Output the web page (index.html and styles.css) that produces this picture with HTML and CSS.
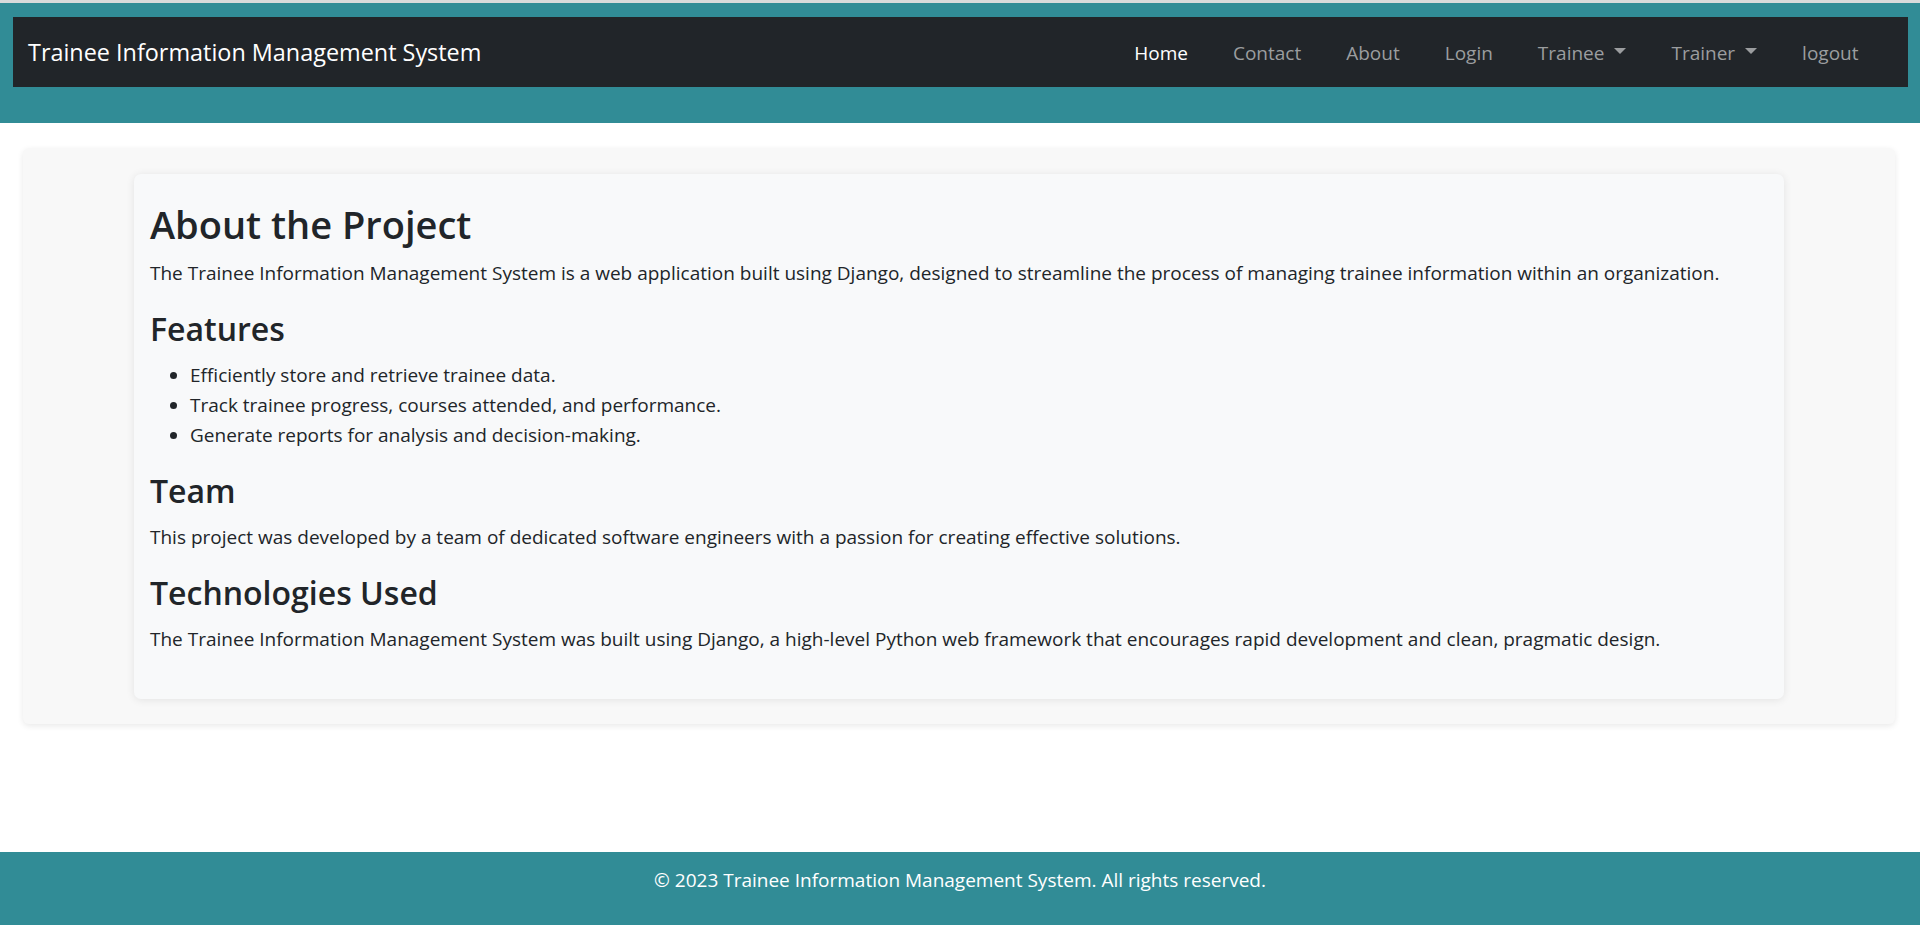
FILE: index.html
```html
<!DOCTYPE html>
<html lang="en">
<head>
<meta charset="utf-8">
<title>About - Trainee Information Management System</title>
<link rel="stylesheet" href="styles.css">
</head>
<body>
<header class="site-header">
  <nav class="navbar">
    <a class="brand" href="#">Trainee Information Management System</a>
    <ul class="nav-links">
      <li><a class="nav-link active" href="#">Home</a></li>
      <li><a class="nav-link" href="#">Contact</a></li>
      <li><a class="nav-link" href="#">About</a></li>
      <li><a class="nav-link" href="#">Login</a></li>
      <li><a class="nav-link dropdown-toggle" href="#">Trainee</a></li>
      <li><a class="nav-link dropdown-toggle" href="#">Trainer</a></li>
      <li><a class="nav-link" href="#">logout</a></li>
    </ul>
  </nav>
</header>

<main class="page">
  <section class="outer-card">
    <div class="about-card">
      <h1 class="title">About the Project</h1>
      <p>The Trainee Information Management System is a web application built using Django, designed to streamline the process of managing trainee information within an organization.</p>

      <h3 class="subtitle">Features</h3>
      <ul class="features">
        <li>Efficiently store and retrieve trainee data.</li>
        <li>Track trainee progress, courses attended, and performance.</li>
        <li>Generate reports for analysis and decision-making.</li>
      </ul>

      <h3 class="subtitle">Team</h3>
      <p>This project was developed by a team of dedicated software engineers with a passion for creating effective solutions.</p>

      <h3 class="subtitle">Technologies Used</h3>
      <p>The Trainee Information Management System was built using Django, a high-level Python web framework that encourages rapid development and clean, pragmatic design.</p>
    </div>
  </section>
</main>

<footer class="site-footer">
  <p>&copy; 2023 Trainee Information Management System. All rights reserved.</p>
</footer>
</body>
</html>
```

FILE: styles.css
```css
* {
  box-sizing: border-box;
}

html, body {
  margin: 0;
  padding: 0;
}

body {
  min-height: 100vh;
  display: flex;
  flex-direction: column;
  font-family: "Open Sans", "Noto Sans", sans-serif;
  font-size: 19px;
  line-height: 30px;
  color: #212529;
  background: #ffffff;
}

a {
  text-decoration: none;
}

/* ---------- header ---------- */
.site-header {
  border-top: 3px solid #d9dadb;
  background: #318c96;
  padding: 14px 12px 36px 13px;
}

.navbar {
  height: 70px;
  background: #212529;
  display: flex;
  align-items: center;
  padding: 0 27px 0 15px;
}

.brand {
  color: #ffffff;
  font-size: 23.4px;
  line-height: 30px;
}

.nav-links {
  list-style: none;
  margin: 0 0 0 auto;
  padding: 0;
  display: flex;
  align-items: center;
}

.nav-link {
  display: flex;
  align-items: center;
  padding: 1px 22.5px 0;
  color: #9b9d9f;
  font-size: 19px;
  line-height: 30px;
}

.nav-link.active {
  color: #ffffff;
}

.dropdown-toggle::after {
  content: "";
  display: inline-block;
  margin-left: 10px;
  margin-top: -4px;
  border-top: 6px solid currentColor;
  border-left: 6px solid transparent;
  border-right: 6px solid transparent;
}

/* ---------- main ---------- */
.page {
  padding: 25px 25px 0 23px;
}

.outer-card {
  background: #f8f8f8;
  border-radius: 6px;
  box-shadow: 0 2px 6px rgba(0, 0, 0, 0.09);
  padding: 26px 0 25px;
}

.about-card {
  max-width: 1650px;
  margin: 0 auto;
  background: #f8f9fa;
  border-radius: 7px;
  box-shadow: 0 1px 8px rgba(0, 0, 0, 0.09);
  padding: 26px 16px 25px;
}

.about-card p {
  margin: 0 0 20px;
}

.title {
  margin: 0 0 10px;
  font-size: 38px;
  line-height: 48px;
  font-weight: 600;
}

.subtitle {
  margin: 0 0 10px;
  font-size: 32px;
  line-height: 42px;
  font-weight: 600;
}

.features {
  margin: 0 0 20px;
  padding-left: 40px;
}

/* ---------- footer ---------- */
.site-footer {
  margin-top: auto;
  background: #318c96;
  color: #ffffff;
  text-align: center;
  padding: 13px 0 10px;
}

.site-footer p {
  margin: 0 0 20px;
}
```
